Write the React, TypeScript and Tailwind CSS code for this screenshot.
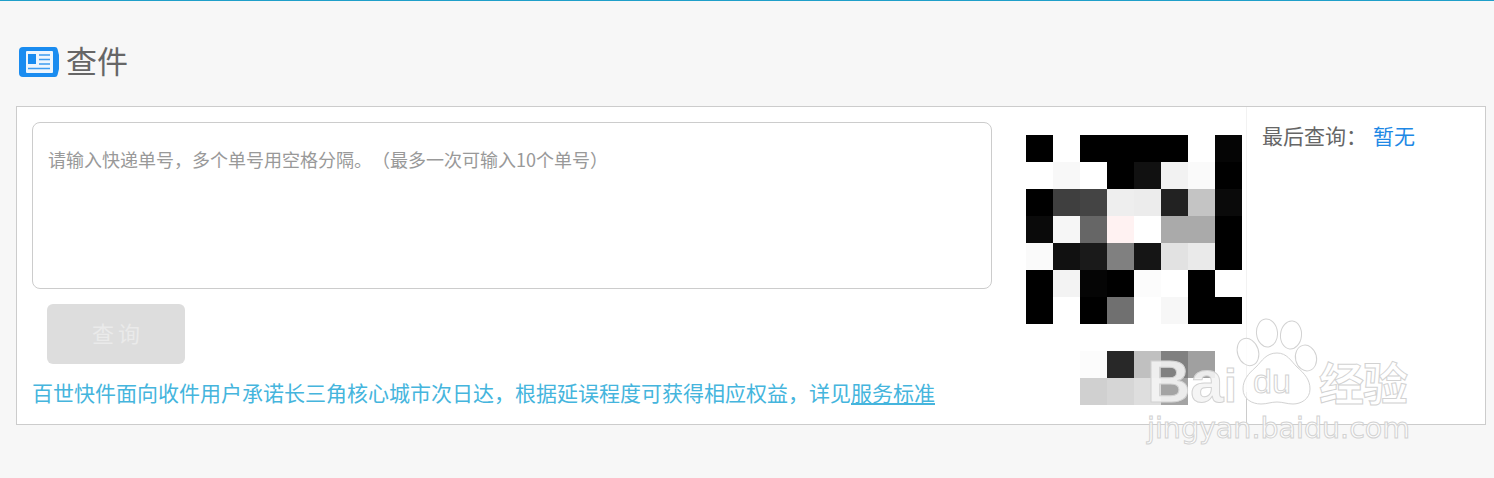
import React from 'react';

const CELL = 27;
const QR_ROWS: string[][] = [
  ['#000', '#fff', '#000', '#000', '#000', '#000', '#fff', '#050505'],
  ['#fff', '#f8f8f8', '#fff', '#000', '#111', '#f2f2f2', '#fafafa', '#000'],
  ['#000', '#3f3f3f', '#444', '#eee', '#ececec', '#222', '#c4c4c4', '#0a0a0a'],
  ['#0a0a0a', '#f6f6f6', '#666', '#fff2f2', '#fff', '#aaa', '#aaa', '#000'],
  ['#fafafa', '#111', '#1a1a1a', '#808080', '#151515', '#e2e2e2', '#eaeaea', '#000'],
  ['#000', '#f3f3f3', '#050505', '#000', '#fcfcfc', '#fff', '#000', '#fff'],
  ['#000', '#fff', '#000', '#707070', '#fff', '#f7f7f7', '#000', '#000'],
  ['#fff', '#fff', '#fff', '#fff', '#fff', '#fff', '#fff', '#fff'],
  ['#fff', '#fff', '#fcfcfc', '#282828', '#c0c0c0', '#808080', '#a0a0a0', '#fff'],
  ['#fff', '#fff', '#d0d0d0', '#d6d6d6', '#dedede', '#a4a4a4', '#fff', '#fff'],
];

const NewsIcon = () => (
  <svg width="40" height="30" viewBox="0 0 40 30" className="shrink-0">
    <path d="M4 0h32q2 0 2.500 2l1.500 6v14l-1.500 6q-.5 2-2.500 2H4q-4 0-4-4V4q0-4 4-4z" fill="#1a8cf0" />
    <rect x="7" y="4" width="27" height="22" rx="1" fill="#eef6fe" />
    <rect x="9" y="7" width="8" height="10" fill="#1a8cf0" />
    <path d="M20 8h11M20 12.500h11M20 17h11M9 21.500h22" stroke="#3d9cf0" strokeWidth="1.600" />
  </svg>
);

const QrBlock = () => (
  <svg width="216" height="270" viewBox="0 0 216 270">
    {QR_ROWS.map((row, y) =>
      row.map((fill, x) => <rect key={`${x}-${y}`} x={x * CELL} y={y * CELL} width={CELL} height={CELL} fill={fill} />),
    )}
  </svg>
);

const Watermark = () => (
  <svg width="290" height="130" viewBox="0 0 290 130" className="absolute left-[1140px] top-[316px]">
    <g fill="#fff" fillOpacity="0.72" stroke="#d2d2d2" strokeWidth="1">
      <text x="7" y="85" fontFamily="Liberation Sans, sans-serif" fontWeight="700" fontSize="60" fill="#f4f4f4" fillOpacity="0.9">Ba</text>
      <text x="84" y="85" fontFamily="Liberation Sans, sans-serif" fontWeight="700" fontSize="46">i</text>
      <ellipse cx="127" cy="16" rx="10.500" ry="14" transform="rotate(-6 127 16)" />
      <ellipse cx="151" cy="18" rx="10.500" ry="14" transform="rotate(6 151 18)" />
      <ellipse cx="108" cy="35" rx="10.500" ry="14" transform="rotate(-18 108 35)" />
      <ellipse cx="166" cy="41" rx="10.500" ry="13" transform="rotate(-14 166 41)" />
      <path d="M137 36c10 0 14 8 20 14 8 7 13 13 13 22 0 10-9 15-17 15-6 0-10-2-16-2s-10 2-16 2c-9 0-18-5-18-15 0-9 5-15 13-22 6-6 10-14 21-14z" />
      <text x="113" y="76" fontFamily="Liberation Sans, sans-serif" fontSize="34">du</text>
      <text x="179" y="84" fontFamily="'Noto Sans CJK SC', sans-serif" fontWeight="700" fontSize="45" letterSpacing="-1">经验</text>
      <text x="7" y="121" fontFamily="'DejaVu Sans', sans-serif" fontSize="28.500" fill="#fff" fillOpacity="0.8">jingyan.baidu.com</text>
    </g>
  </svg>
);

export default function App() {
  return (
    <div className="relative h-[478px] w-[1494px] overflow-hidden border-t border-t-[#1f9fc9] bg-[#f7f7f7] px-4 font-['Noto_Sans_CJK_SC',sans-serif]">
      <div className="flex h-[105px] items-center gap-[7px] pl-[3px] pt-[16px]">
        <NewsIcon />
        <h1 className="mb-[3px] text-[31px] leading-[40px] font-normal text-[#666]">查件</h1>
      </div>

      <div className="flex h-[319px] w-[1470px] border border-[#ccc] bg-white">
        <div className="w-[990px] px-[15px] pt-[15px]">
          <textarea
            readOnly
            placeholder="请输入快递单号，多个单号用空格分隔。（最多一次可输入10个单号）"
            className="block h-[167px] w-[960px] resize-none rounded-lg border border-[#ccc] bg-white px-[15px] py-[23px] text-[18px] leading-[26px] outline-none [text-spacing-trim:space-all] placeholder:text-[#999]"
          />
          <button
            disabled
            className="mt-[15px] ml-[15px] block h-[60px] w-[138px] rounded-md bg-[#ddd] pb-[4px] pl-[4px] text-[22px] tracking-[4px] text-[#eaeaea]"
          >
            查询
          </button>
          <p className="mt-[13px] text-[21px] leading-[30px] whitespace-nowrap text-[#45b5dd] [text-spacing-trim:space-all]">
            百世快件面向收件用户承诺长三角核心城市次日达，根据延误程度可获得相应权益，详见
            <a href="#" className="underline">服务标准</a>
          </p>
        </div>

        <div className="relative flex w-[240px] flex-col border-r border-r-[#f2f2f2] pt-[28px] pl-[19px]">
          <QrBlock />
          <div className="absolute right-[-1px] bottom-0 h-[32px] w-px bg-[#ccc]" />
        </div>

        <div className="flex items-start gap-[6px] pt-[13px] pl-[15px] text-[21px] leading-[30px]">
          <span className="text-[#666]">最后查询：</span>
          <span className="text-[#1e88e5]">暂无</span>
        </div>
      </div>

      <Watermark />
    </div>
  );
}
